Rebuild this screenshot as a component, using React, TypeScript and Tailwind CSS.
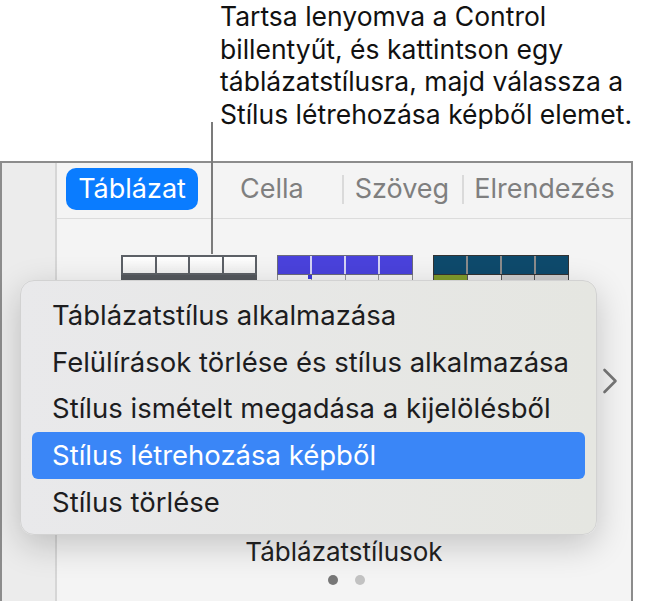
const MENU_ITEMS = [
  'Táblázatstílus alkalmazása',
  'Felülírások törlése és stílus alkalmazása',
  'Stílus ismételt megadása a kijelölésből',
  'Stílus létrehozása képből',
  'Stílus törlése',
]

const ACTIVE_ITEM = 3

function Tabs() {
  return (
    <div className="flex h-[56px] items-start border-b border-[#dcdcdc] pt-[5px] pl-[9px] text-[27px] text-[#7f7f7f]">
      <div className="flex h-[42px] w-[132px] items-center justify-center rounded-[10px] bg-[#0a7cff] text-white">
        Táblázat
      </div>
      <div className="ml-[42px] flex h-[42px] items-center">Cella</div>
      <div className="ml-[38px] mt-[7px] h-[29px] w-[2px] bg-[#dadada]" />
      <div className="ml-[11px] flex h-[42px] items-center">Szöveg</div>
      <div className="ml-[13px] mt-[7px] h-[29px] w-[2px] bg-[#dadada]" />
      <div className="ml-[10px] flex h-[42px] items-center">Elrendezés</div>
    </div>
  )
}

function Thumbnails() {
  return (
    <div className="mt-[36px] flex h-[40px] gap-[20px] pl-[64px]">
      <div className="flex w-[136px] flex-col">
        <div className="grid h-[20px] grid-cols-4 gap-[2px] border-2 border-[#5c6066] bg-[#5c6066]">
          <div className="bg-gradient-to-b from-white to-[#eeeeee]" />
          <div className="bg-gradient-to-b from-white to-[#eeeeee]" />
          <div className="bg-gradient-to-b from-white to-[#eeeeee]" />
          <div className="bg-gradient-to-b from-white to-[#eeeeee]" />
        </div>
        <div className="h-[8px] bg-[#53575c]" />
        <div className="h-[12px] bg-[#e6e6e6]" />
      </div>
      <div className="flex w-[136px] flex-col">
        <div className="grid h-[20px] grid-cols-4 gap-[2px] border border-[#6b6b7a] bg-[#d4d2f4]">
          <div className="bg-[#4a42dc]" />
          <div className="bg-[#4a42dc]" />
          <div className="bg-[#4a42dc]" />
          <div className="bg-[#4a42dc]" />
        </div>
        <div className="grid h-[20px] grid-cols-4 gap-[1px] border-x border-[#8a8a8a] bg-[#9a9a9a]">
          <div className="bg-[#f2f2f2] pl-[30px]">
            <div className="h-[4px] w-[4px] bg-[#3a3ad8]" />
          </div>
          <div className="bg-[#f2f2f2]" />
          <div className="bg-[#f2f2f2]" />
          <div className="bg-[#f2f2f2]" />
        </div>
      </div>
      <div className="flex w-[136px] flex-col">
        <div className="grid h-[20px] grid-cols-4 gap-[2px] border border-[#333333] bg-[#8c8c8c]">
          <div className="bg-[#0e4a6c]" />
          <div className="bg-[#0e4a6c]" />
          <div className="bg-[#0e4a6c]" />
          <div className="bg-[#0e4a6c]" />
        </div>
        <div className="grid h-[20px] grid-cols-4 gap-[1px] border-x border-[#444444] bg-[#555555]">
          <div className="bg-[#7f9b2c]" />
          <div className="bg-[#e8e8e8]" />
          <div className="bg-[#cccccc]" />
          <div className="bg-[#cccccc]" />
        </div>
      </div>
    </div>
  )
}

function ContextMenu() {
  return (
    <div className="absolute top-[280px] left-[20px] h-[255px] w-[577px] rounded-[14px] border border-[#d2d2d2] bg-gradient-to-r from-[#e9e9eb] to-[#e5e6e1] px-[11px] pt-[11px] shadow-[0_10px_34px_rgba(0,0,0,0.2)]">
      {MENU_ITEMS.map((item, i) => (
        <div
          key={item}
          className={
            i === ACTIVE_ITEM
              ? 'flex h-[46.75px] items-center rounded-[6px] bg-[#3a86f7] pl-[20px] text-[27.5px] whitespace-nowrap text-white'
              : 'flex h-[46.75px] items-center pl-[20px] text-[27.5px] whitespace-nowrap text-[#1d1d1f]'
          }
        >
          {item}
        </div>
      ))}
    </div>
  )
}

export default function App() {
  return (
    <div className="relative h-[601px] w-[646px] overflow-hidden bg-white font-['Inter',sans-serif]">
      <p className="pl-[220px] text-[26.5px] leading-[32.5px] whitespace-nowrap text-[#111111]">
        Tartsa lenyomva a Control
        <br />
        billentyűt, és kattintson egy
        <br />
        táblázatstílusra, majd válassza a
        <br />
        Stílus létrehozása képből elemet.
      </p>

      <div className="mt-[31px] flex h-[500px] w-[633px] border-t-2 border-r-2 border-l-2 border-[#8c8c8c]">
        <div className="w-[55px] border-r-2 border-[#d6d6d6] bg-[#ececec]" />
        <div className="flex flex-1 flex-col bg-[#f4f4f4]">
          <Tabs />
          <Thumbnails />
          <div className="mt-[73px] flex justify-end pr-[13px]">
            <svg width="16" height="26" viewBox="0 0 16 26" fill="none">
              <polyline
                points="2.5,2 13.5,13 2.5,24"
                stroke="#777777"
                strokeWidth="2.6"
                strokeLinecap="round"
                strokeLinejoin="round"
              />
            </svg>
          </div>
          <div className="mt-[144px] text-center text-[26px] leading-[28px] text-[#222222]">
            Táblázatstílusok
          </div>
          <div className="mt-[9px] flex justify-center gap-[17px] pl-[4px]">
            <div className="h-[10px] w-[10px] rounded-full bg-[#777777]" />
            <div className="h-[10px] w-[10px] rounded-full bg-[#c2c2c2]" />
          </div>
        </div>
      </div>

      <div className="absolute top-[122px] left-[211px] h-[132px] w-[2px] bg-[#7b7b7b]" />
      <ContextMenu />
    </div>
  )
}
